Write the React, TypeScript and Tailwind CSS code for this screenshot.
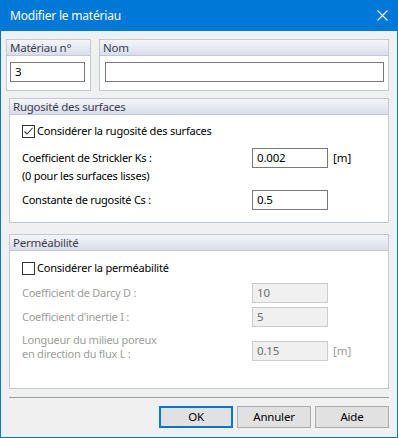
import React from "react";

const font = { fontFamily: '"Noto Sans", "DejaVu Sans", sans-serif' };

function GroupBox({
  title,
  className,
  children,
}: {
  title: string;
  className: string;
  children?: React.ReactNode;
}) {
  return (
    <div className={"flex flex-col border border-[#c3c8d6] bg-white " + className}>
      <div className="h-[16px] shrink-0 border-b border-[#c3c8d6] bg-gradient-to-b from-[#f5f6fa] to-[#dadde8] pl-[3px] text-[11.5px] leading-[15px] tracking-[-0.25px] text-[#3b3d4f]">
        {title}
      </div>
      <div className="flex flex-1 flex-col">{children}</div>
    </div>
  );
}

function Input({
  value,
  disabled,
  className,
}: {
  value: string;
  disabled?: boolean;
  className: string;
}) {
  return (
    <div
      className={
        "flex h-[20px] shrink-0 items-center border pl-[4px] text-[11.5px] tracking-[-0.2px] " +
        (disabled
          ? "border-[#cccccc] bg-[#f0f0f0] text-[#6d6d6d] "
          : "border-[#7a7a7a] bg-white text-black ") +
        className
      }
    >
      {value}
    </div>
  );
}

function Checkbox({ checked, label }: { checked: boolean; label: string }) {
  return (
    <div className="flex h-[16px] items-center">
      <div className="flex h-[13px] w-[13px] items-center justify-center border border-[#333333] bg-white">
        {checked && (
          <svg width="11" height="11" viewBox="0 0 11 11">
            <path d="M1.5 5.5 L4 8 L9.5 2" fill="none" stroke="#333333" strokeWidth="1.1" />
          </svg>
        )}
      </div>
      <span className="ml-[2px] text-[11px] leading-[16px] tracking-[-0.2px] text-black">{label}</span>
    </div>
  );
}

const lbl = "w-[230px] text-[11px] tracking-[-0.25px]";

export default function App() {
  return (
    <div
      className="flex h-[438px] w-[398px] flex-col border-x border-b border-[#0078d7] bg-[#f0f0f0]"
      style={font}
    >
      <div className="flex h-[31px] shrink-0 items-center justify-between bg-[#0078d7] pl-[9px] pr-[9px]">
        <span className="text-[12px] tracking-[-0.2px] text-white">Modifier le matériau</span>
        <svg width="11" height="11" viewBox="0 0 11 11">
          <path d="M0.5 0.5 L10.5 10.5 M10.5 0.5 L0.5 10.5" stroke="#ffffff" strokeWidth="1.1" />
        </svg>
      </div>

      <div className="ml-[5px] mt-[8px] flex gap-[8px]">
        <GroupBox title="Matériau n°" className="h-[52px] w-[85px]">
          <Input value="3" className="ml-[3px] mt-[6px] w-[75px]" />
        </GroupBox>
        <GroupBox title="Nom" className="h-[52px] w-[290px]">
          <Input value="" className="ml-[5px] mt-[6px] w-[279px]" />
        </GroupBox>
      </div>

      <GroupBox title="Rugosité des surfaces" className="ml-[8px] mt-[7px] h-[125px] w-[380px]">
        <div className="flex flex-col pl-[12px]">
          <div className="mt-[8px]">
            <Checkbox checked label="Considérer la rugosité des surfaces" />
          </div>
          <div className="mt-[9px] flex h-[20px] items-center">
            <span className={lbl + " text-black"}>Coefficient de Strickler Ks :</span>
            <Input value="0.002" className="w-[76px]" />
            <span className="ml-[5px] text-[11.5px] text-black">[m]</span>
          </div>
          <div className="h-[16px] text-[11px] leading-[16px] tracking-[-0.25px] text-black">
            (0 pour les surfaces lisses)
          </div>
          <div className="mt-[6px] flex h-[20px] items-center">
            <span className={lbl + " text-black"}>Constante de rugosité Cs :</span>
            <Input value="0.5" className="w-[76px]" />
          </div>
        </div>
      </GroupBox>

      <GroupBox title="Perméabilité" className="ml-[8px] mt-[11px] h-[155px] w-[380px]">
        <div className="flex flex-col pl-[12px]">
          <div className="mt-[9px]">
            <Checkbox checked={false} label="Considérer la perméabilité" />
          </div>
          <div className="mt-[7px] flex h-[20px] items-center">
            <span className={lbl + " text-[#9d9d9d]"}>Coefficient de Darcy D :</span>
            <Input value="10" disabled className="w-[76px]" />
          </div>
          <div className="mt-[4px] flex h-[20px] items-center">
            <span className={lbl + " text-[#9d9d9d]"}>Coefficient d'inertie I :</span>
            <Input value="5" disabled className="w-[76px]" />
          </div>
          <div className="mt-[6px] flex items-start">
            <span className={lbl + " leading-[14px] text-[#9d9d9d]"}>
              Longueur du milieu poreux
              <br />
              en direction du flux L :
            </span>
            <div className="mt-[8px] flex items-center">
              <Input value="0.15" disabled className="w-[76px]" />
              <span className="ml-[5px] text-[11.5px] text-[#9d9d9d]">[m]</span>
            </div>
          </div>
        </div>
      </GroupBox>

      <div className="ml-[8px] mt-[8px] h-px w-[380px] bg-[#a0a0a0]" />

      <div className="mt-[8px] flex justify-end gap-[4px] pr-[8px] text-[11.5px] tracking-[-0.2px] text-black">
        <div className="flex h-[22px] w-[74px] items-center justify-center border-2 border-[#0078d7] bg-[#e1e1e1]">
          OK
        </div>
        <div className="flex h-[22px] w-[74px] items-center justify-center border border-[#adadad] bg-[#e1e1e1]">
          Annuler
        </div>
        <div className="flex h-[22px] w-[74px] items-center justify-center border border-[#adadad] bg-[#e1e1e1]">
          Aide
        </div>
      </div>
    </div>
  );
}
